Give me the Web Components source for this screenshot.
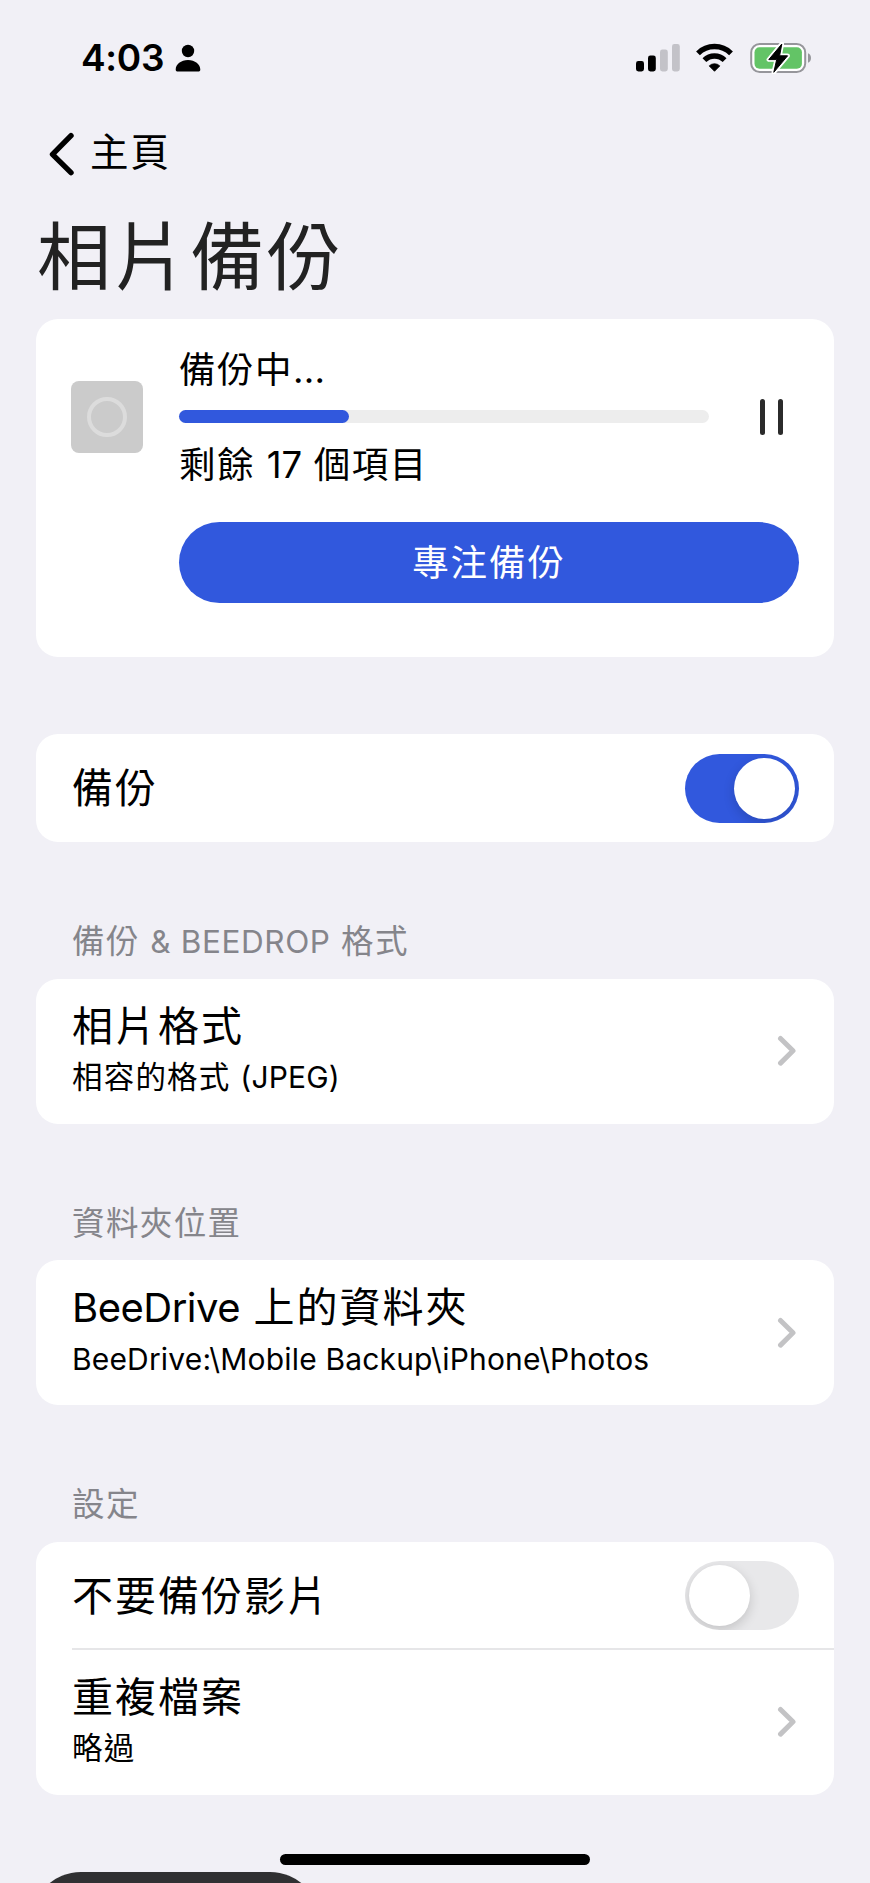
<!DOCTYPE html>
<html lang="zh-Hant">
<head>
  <meta charset="utf-8">
  <title>相片備份</title>
  <style>
    body {
      margin: 0;
      background: #f1f0f6;
      color: #000;
      font-family: Inter, "Noto Sans CJK TC", sans-serif;
      font-weight: 400;
    }
  </style>
</head>
<body>
  <backup-page>
    <status-bar slot="top" time="4:03"></status-bar>
    <nav-header slot="top" back="主頁" heading="相片備份"></nav-header>

    <backup-progress state="備份中..." remaining="剩餘 17 個項目" action="專注備份" percent="32"></backup-progress>

    <settings-group class="first">
      <settings-row label="備份"><toggle-switch on></toggle-switch></settings-row>
    </settings-group>

    <settings-group heading="備份 &amp; BEEDROP 格式">
      <settings-row label="相片格式" detail="相容的格式 (JPEG)"><chevron-icon></chevron-icon></settings-row>
    </settings-group>

    <settings-group heading="資料夾位置">
      <settings-row label="BeeDrive 上的資料夾" detail="BeeDrive:\Mobile Backup\iPhone\Photos"><chevron-icon></chevron-icon></settings-row>
    </settings-group>

    <settings-group heading="設定">
      <settings-row label="不要備份影片" divider><toggle-switch></toggle-switch></settings-row>
      <settings-row label="重複檔案" detail="略過"><chevron-icon></chevron-icon></settings-row>
    </settings-group>

    <home-indicator slot="bottom"></home-indicator>
  </backup-page>

  <script>
    // Latin runs get their own size and tracking next to the Chinese glyphs
    function mixed(text) {
      const safe = (text || '').replace(/&/g, '&amp;').replace(/</g, '&lt;')
      return safe.replace(/[\x21-\x7e]+(?: [\x21-\x7e]+)*/g, '<span class="latin">$&</span>')
    }

    class BackupPage extends HTMLElement {
      constructor() {
        super()
        this.attachShadow({ mode: 'open' }).innerHTML = `
      <style>
        :host {
          display: flex;
          flex-direction: column;
          height: 1883px;
          overflow: hidden;
        }
        main {
          flex: 1;
          padding: 0 36px;
        }
      </style>
      <slot name="top"></slot>
      <main><slot></slot></main>
      <slot name="bottom"></slot>
    `
      }
    }

    class StatusBar extends HTMLElement {
      constructor() {
        super()
        this.attachShadow({ mode: 'open' })
      }

      connectedCallback() {
        this.shadowRoot.innerHTML = `
      <style>
        :host {
          display: flex;
          justify-content: space-between;
          align-items: center;
          box-sizing: border-box;
          height: 116px;
          padding: 0 57px 0 81px;
        }
        .left, .right {
          display: flex;
          align-items: center;
        }
        .time {
          font-size: 37px;
          font-weight: 600;
          line-height: 44px;
          letter-spacing: -.3px;
        }
        .person { margin-left: 11px; }
        .wifi { margin-left: 15px; }
        .battery { margin-left: 16px; }
        svg { display: block; }
      </style>
      <div class="left">
        <span class="time">${this.getAttribute('time')}</span>
        <svg class="person" width="26" height="28" viewBox="0 0 26 28">
          <circle cx="13" cy="7" r="6.2"/>
          <path d="M3 27.5C1.4 27.5.7 26.8.7 25.4.7 20.6 6 16.1 13 16.1s12.3 4.5 12.3 9.3c0 1.4-.7 2.1-2.3 2.1z"/>
        </svg>
      </div>
      <div class="right">
        <svg width="45" height="30" viewBox="0 0 45 30">
          <rect x="1" y="18" width="8" height="10.5" rx="2.4"/>
          <rect x="13" y="12.5" width="7.8" height="16" rx="2.4"/>
          <rect x="25" y="6.5" width="7.8" height="22" rx="2.4" fill="#c3c2c8"/>
          <rect x="37" y="1" width="7.8" height="27.5" rx="2.4" fill="#c3c2c8"/>
        </svg>
        <svg class="wifi" width="39" height="30" viewBox="0 0 39 30">
          <g fill="none" stroke="#000" stroke-width="5.4">
            <path d="M3 10.3a23.500 23.500 0 0 1 33 0"/>
            <path d="M9.400 17.200a14.400 14.400 0 0 1 20.200 0"/>
          </g>
          <path d="M19.500 28.300l-5.300-5.400a7.600 7.600 0 0 1 10.600 0z" stroke="#000" stroke-width=".8" stroke-linejoin="round"/>
        </svg>
        <svg class="battery" width="63" height="32" viewBox="0 0 63 32">
          <rect x="1.200" y="2" width="54" height="28" rx="8.500" fill="#fff" stroke="#96969b" stroke-width="2"/>
          <rect x="4.500" y="5.300" width="47.400" height="21.400" rx="5" fill="#63c466"/>
          <path d="M58 11.200c2 .7 3 2.500 3 4.800s-1 4.100-3 4.800z" fill="#96969b"/>
          <path d="M31.800 2L18.800 17.600h7.900L23.800 30.300l13.800-16.500h-8z" stroke="#fff" stroke-width="4.500" stroke-linejoin="round"/>
          <path d="M31.800 2L18.800 17.600h7.900L23.800 30.300l13.800-16.500h-8z" stroke="#000" stroke-width="1" stroke-linejoin="round"/>
        </svg>
      </div>
    `
      }
    }

    class NavHeader extends HTMLElement {
      constructor() {
        super()
        this.attachShadow({ mode: 'open' })
      }

      connectedCallback() {
        this.shadowRoot.innerHTML = `
      <style>
        :host {
          display: block;
          height: 203px;
        }
        .back {
          display: flex;
          align-items: center;
          height: 76px;
          padding-left: 47px;
          font-size: 38.5px;
          line-height: 46px;
          letter-spacing: 2px;
        }
        .back svg { margin-right: 15px; }
        .back span { padding-bottom: 4px; }
        h1 {
          margin: 17px 0 0 37px;
          color: #222;
          font-size: 74px;
          font-weight: 400;
          line-height: 96px;
          letter-spacing: 2.6px;
        }
      </style>
      <div class="back">
        <svg width="28" height="44" viewBox="0 0 28 44" fill="none" stroke="#000" stroke-width="5.400" stroke-linecap="round" stroke-linejoin="round">
          <path d="M24 3.700L5.500 22.300 24 40.700"/>
        </svg>
        <span>${this.getAttribute('back')}</span>
      </div>
      <h1>${this.getAttribute('heading')}</h1>
    `
      }
    }

    class BackupProgress extends HTMLElement {
      constructor() {
        super()
        this.attachShadow({ mode: 'open' })
      }

      connectedCallback() {
        this.shadowRoot.innerHTML = `
      <style>
        :host {
          display: grid;
          grid-template-columns: 72px 530px 1fr;
          column-gap: 36px;
          align-content: start;
          box-sizing: border-box;
          height: 338px;
          padding: 26px 35px 0;
          border-radius: 22px;
          background: #fff;
          font-size: 36.5px;
          line-height: 50px;
          letter-spacing: 1.5px;
        }
        .thumb {
          align-self: center;
          display: grid;
          place-items: center;
          height: 72px;
          margin-bottom: 2px;
          border-radius: 8px;
          background: #cbcbcb;
        }
        .ring {
          box-sizing: border-box;
          width: 40px;
          height: 40px;
          border: 4px solid #dcdcdc;
          border-radius: 50%;
        }
        .track {
          height: 13px;
          margin: 15px 0 17px;
          border-radius: 7px;
          background: #ededed;
        }
        .fill {
          width: ${this.getAttribute('percent')}%;
          height: 100%;
          border-radius: 7px;
          background: #3158dd;
        }
        .latin { letter-spacing: -.2px; }
        .state .latin { letter-spacing: .2px; }
        .pause {
          display: flex;
          align-items: center;
          gap: 13px;
          margin: 0 0 2px 15px;
        }
        .pause i {
          width: 5px;
          height: 36px;
          border-radius: 3px;
          background: #2b2b2b;
        }
        button {
          grid-column: 2 / 4;
          height: 81px;
          margin-top: 32px;
          padding: 0;
          border: 0;
          border-radius: 41px;
          background: #3158dd;
          color: #fff;
          font: inherit;
          letter-spacing: 1.9px;
        }
      </style>
      <div class="thumb"><div class="ring"></div></div>
      <div>
        <div class="state">${mixed(this.getAttribute('state'))}</div>
        <div class="track"><div class="fill"></div></div>
        <div>${mixed(this.getAttribute('remaining'))}</div>
      </div>
      <div class="pause"><i></i><i></i></div>
      <button>${this.getAttribute('action')}</button>
    `
      }
    }

    class SettingsGroup extends HTMLElement {
      constructor() {
        super()
        this.attachShadow({ mode: 'open' })
      }

      connectedCallback() {
        const heading = this.getAttribute('heading')

        this.shadowRoot.innerHTML = `
      <style>
        :host { display: block; }
        :host(.first) { margin-top: 77px; }
        h2 {
          box-sizing: border-box;
          height: 136.5px;
          margin: 0;
          padding: 80px 36px 0;
          color: #85858b;
          font-size: 32.5px;
          font-weight: 400;
          line-height: 40px;
          letter-spacing: 1.4px;
        }
        .latin {
          font-size: 31.5px;
          letter-spacing: .6px;
        }
        .card {
          border-radius: 22px;
          background: #fff;
        }
      </style>
      ${heading ? `<h2>${mixed(heading)}</h2>` : ''}
      <div class="card"><slot></slot></div>
    `
      }
    }

    class SettingsRow extends HTMLElement {
      constructor() {
        super()
        this.attachShadow({ mode: 'open' })
      }

      connectedCallback() {
        const detail = this.getAttribute('detail')

        this.shadowRoot.innerHTML = `
      <style>
        :host {
          display: flex;
          box-sizing: border-box;
          height: ${detail ? 145 : 108}px;
          padding-left: 36px;
        }
        .row {
          flex: 1;
          display: flex;
          justify-content: space-between;
          align-items: center;
          padding-right: 35px;
        }
        :host([divider]) .row {
          padding-top: 2px;
          border-bottom: 2px solid #e6e6e8;
        }
        .text { padding-bottom: ${detail ? 4 : 0}px; }
        .label {
          font-size: 41px;
          line-height: 50px;
          letter-spacing: 2px;
        }
        .label .latin {
          font-size: 40px;
          letter-spacing: -.5px;
        }
        .detail {
          margin-top: 6px;
          font-size: 30.5px;
          line-height: 40px;
          letter-spacing: 1.2px;
        }
        .detail .latin {
          font-size: 30px;
          letter-spacing: .17px;
        }
      </style>
      <div class="row">
        <div class="text">
          <div class="label">${mixed(this.getAttribute('label'))}</div>
          ${detail ? `<div class="detail">${mixed(detail)}</div>` : ''}
        </div>
        <slot></slot>
      </div>
    `
      }
    }

    class ToggleSwitch extends HTMLElement {
      constructor() {
        super()
        this.attachShadow({ mode: 'open' }).innerHTML = `
      <style>
        :host {
          display: flex;
          box-sizing: border-box;
          width: 114px;
          height: 69px;
          padding: 4px;
          border-radius: 35px;
          background: #e8e8ea;
          overflow: hidden;
        }
        :host([on]) {
          justify-content: flex-end;
          background: #3158dd;
        }
        .knob {
          width: 61px;
          height: 61px;
          border-radius: 50%;
          background: #fff;
          box-shadow: 0 4px 12px rgba(0, 0, 0, .16);
        }
      </style>
      <div class="knob"></div>
    `
      }
    }

    class ChevronIcon extends HTMLElement {
      constructor() {
        super()
        this.attachShadow({ mode: 'open' }).innerHTML = `
      <style>
        :host {
          display: block;
          margin-right: 1px;
        }
        svg { display: block; }
      </style>
      <svg width="22" height="32" viewBox="0 0 22 32" fill="none" stroke="#c3c3c5" stroke-width="5" stroke-linecap="round" stroke-linejoin="round">
        <path d="M4.500 3.400L17 15.800 4.500 28.100"/>
      </svg>
    `
      }
    }

    class HomeIndicator extends HTMLElement {
      constructor() {
        super()
        this.attachShadow({ mode: 'open' }).innerHTML = `
      <style>
        :host {
          display: block;
          height: 29px;
          overflow: hidden;
        }
        .bar {
          width: 310px;
          height: 11px;
          margin: 0 auto 7px;
          border-radius: 6px;
          background: #000;
        }
        .peek {
          width: 289px;
          height: 100px;
          margin-left: 31px;
          border-radius: 50px;
          background: #303032;
        }
      </style>
      <div class="bar"></div>
      <div class="peek"></div>
    `
      }
    }

    customElements.define('backup-page', BackupPage)
    customElements.define('status-bar', StatusBar)
    customElements.define('nav-header', NavHeader)
    customElements.define('backup-progress', BackupProgress)
    customElements.define('settings-group', SettingsGroup)
    customElements.define('settings-row', SettingsRow)
    customElements.define('toggle-switch', ToggleSwitch)
    customElements.define('chevron-icon', ChevronIcon)
    customElements.define('home-indicator', HomeIndicator)
  </script>
</body>
</html>
